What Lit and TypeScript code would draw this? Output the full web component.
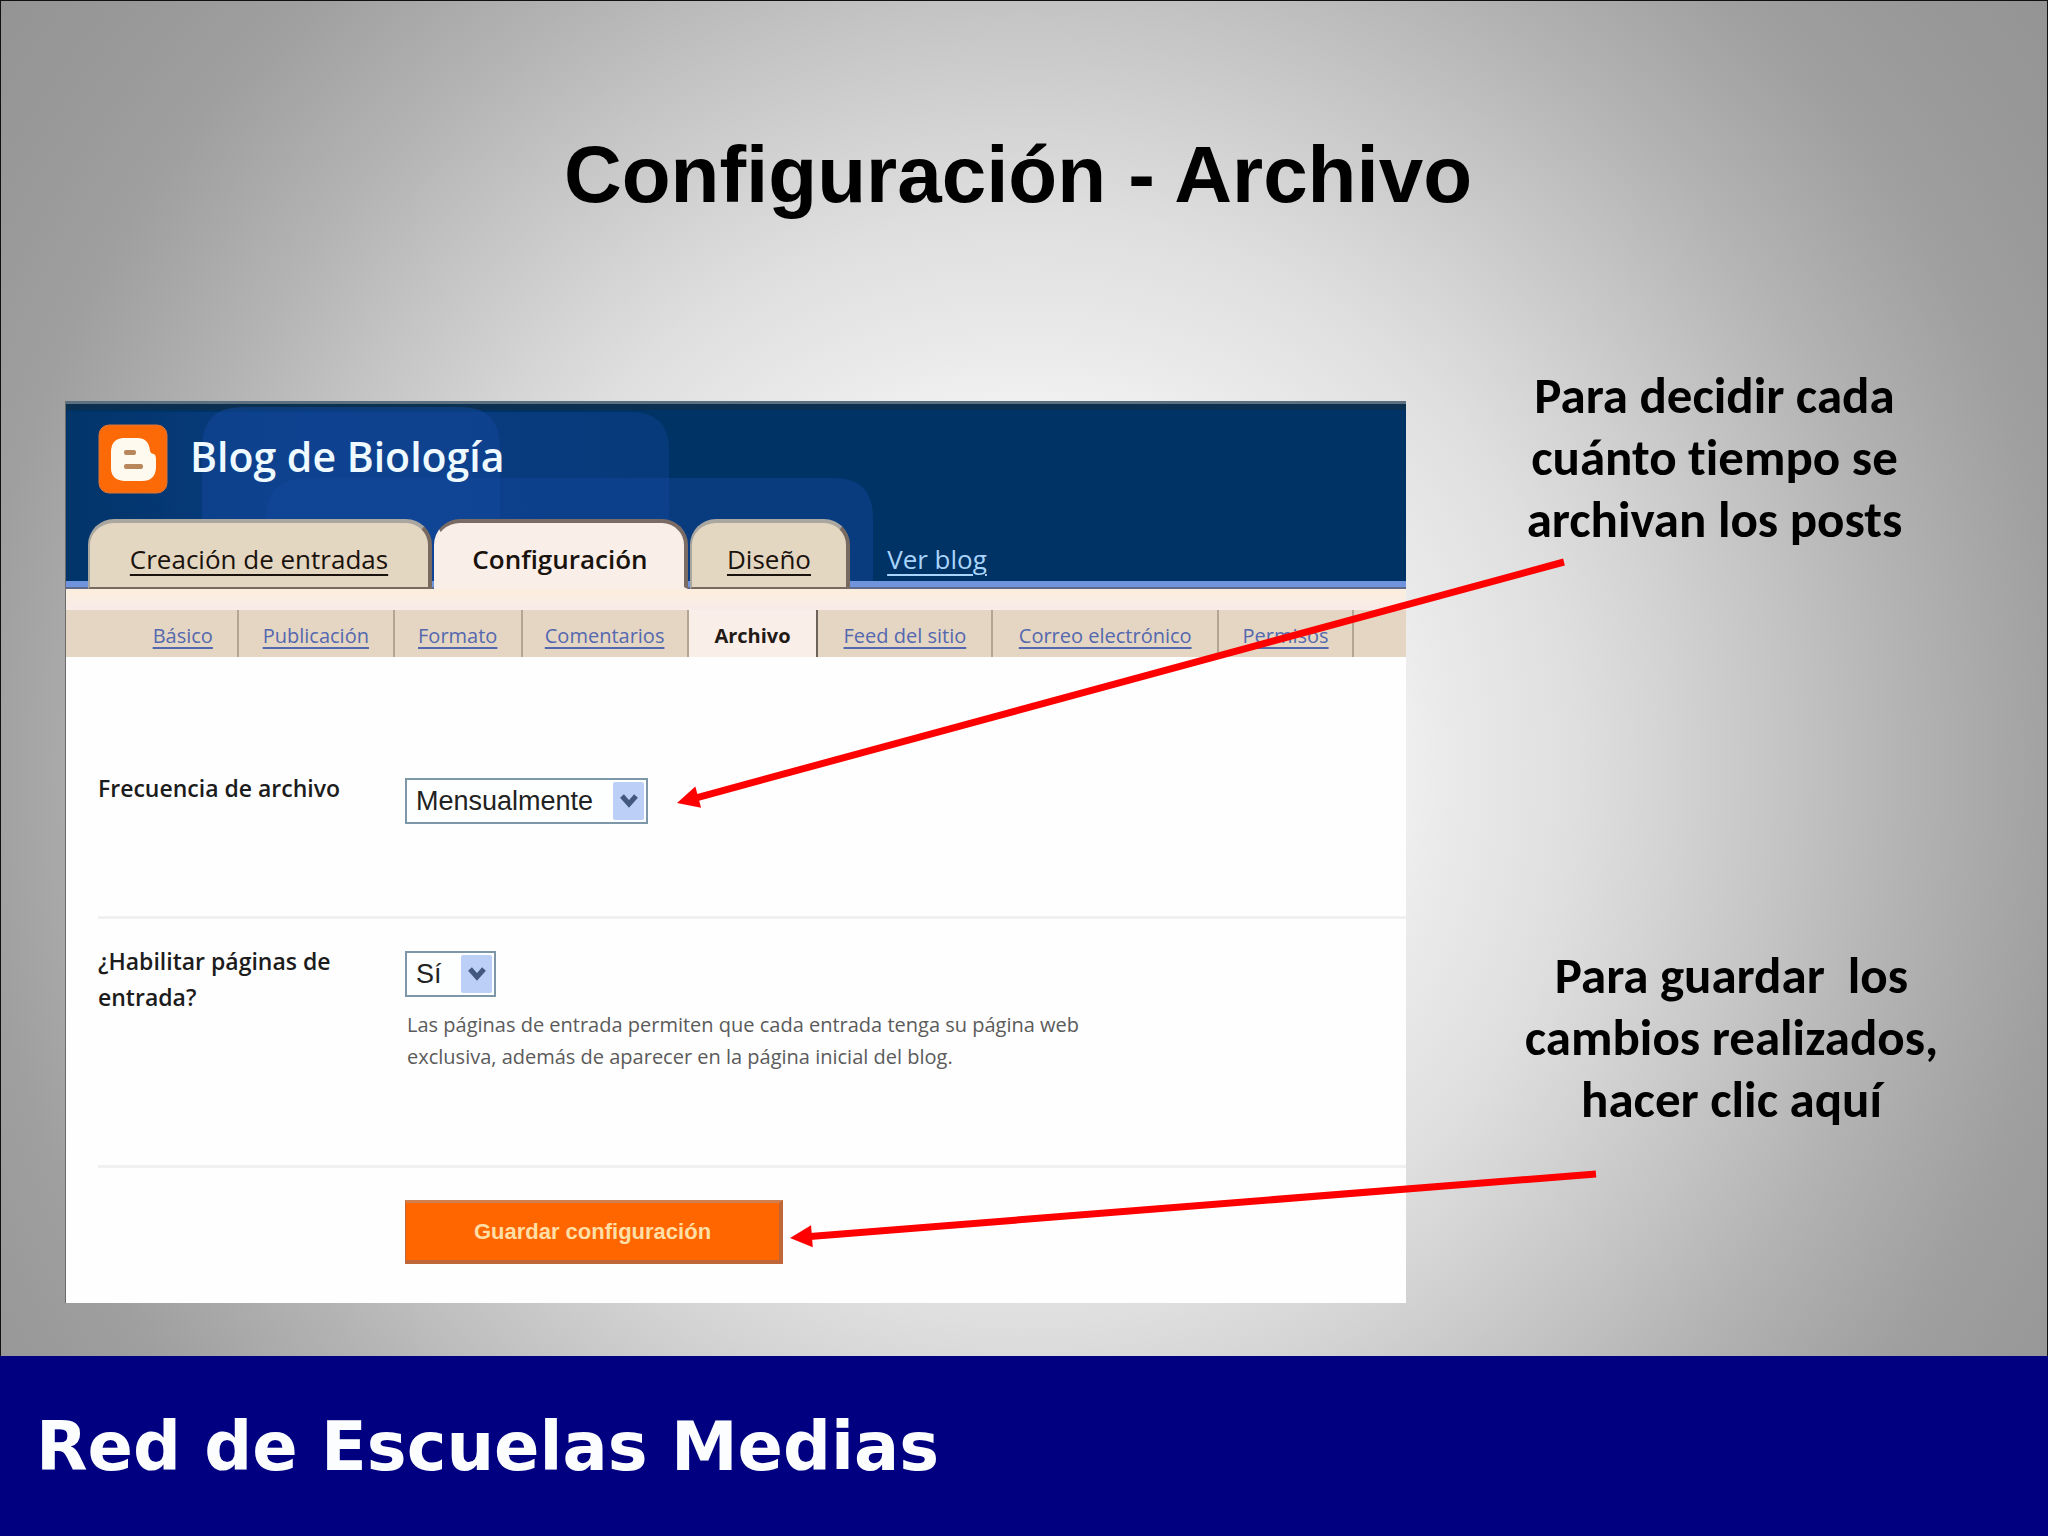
import { LitElement, html, css, svg } from "lit";
import { customElement, property } from "lit/decorators.js";
import { classMap } from "lit/directives/class-map.js";

@customElement("blog-header")
class BlogHeader extends LitElement {
  static styles = css`
    :host {
      display: block;
      font-family: "Open Sans", "Noto Sans", sans-serif;
    }
    .header {
      position: relative;
      display: flex;
      flex-direction: column;
      justify-content: space-between;
      height: 188px;
      background: #003365;
      border-top: 3px solid #5c7080;
      box-sizing: border-box;
    }
    .shapes {
      position: absolute;
      inset: 0;
      width: 100%;
      height: 100%;
    }
    .brand {
      position: relative;
      display: flex;
      align-items: flex-start;
      gap: 22px;
      padding: 20px 0 0 32px;
    }
    .logo {
      width: 70px;
      height: 70px;
    }
    .name {
      margin: 0;
      font-size: 41px;
      line-height: 64px;
      font-weight: 600;
      color: #eefaff;
    }
    .tabs {
      position: relative;
      display: flex;
      align-items: stretch;
      gap: 2px;
      height: 70px;
      padding-left: 22px;
    }
    .tabs::before {
      content: "";
      position: absolute;
      inset: auto 0 0 0;
      height: 6px;
      background: #7093dd;
      border-bottom: 2px solid #5d6a8c;
    }
    .tab {
      position: relative;
      display: flex;
      align-items: center;
      justify-content: center;
      box-sizing: border-box;
      padding-top: 8px;
      border: solid #786a60;
      border-width: 4px 4px 2px 2px;
      border-top-color: #a9a7a0;
      border-left-color: #a9a7a0;
      border-radius: 26px 26px 0 0;
      background: #e4d7c2;
      font-size: 26px;
      line-height: 36px;
      color: #1a120c;
      text-underline-offset: 5px;
      text-decoration-thickness: 2px;
    }
    .entries {
      width: 344px;
    }
    .settings {
      width: 254px;
      background: #f9eee8;
      border-color: #7a6c64;
      border-bottom-color: #f9eee8;
      border-left-color: #f9eee8;
      font-weight: 600;
      text-decoration: none;
    }
    .design {
      width: 160px;
    }
    .view {
      width: 172px;
      border-color: transparent;
      background: none;
      color: #a9d4fb;
    }
  `;

  render() {
    return html`
      <header class="header">
        <svg class="shapes" viewBox="0 0 1341 185" preserveAspectRatio="xMinYMin slice" aria-hidden="true">
          <defs>
            <linearGradient id="fade" x1="0" x2="1">
              <stop offset="0" stop-color="#0f4390" stop-opacity="0.1" />
              <stop offset="0.4" stop-color="#114499" stop-opacity="0.6" />
              <stop offset="1" stop-color="#114499" stop-opacity="0.4" />
            </linearGradient>
          </defs>
          <rect width="1341" height="6" fill="#0b2f50" />
          <path d="M0 8H565Q603 8 603 46V185H0Z" fill="url(#fade)" />
          <path d="M136 185V44Q136 3 176 3H395Q434 3 434 44V185Z" fill="#12479b" opacity="0.55" />
          <path d="M200 185V114Q200 74 240 74H768Q807 74 807 114V185Z" fill="#12459a" opacity="0.5" />
        </svg>
        <div class="brand">
          <svg class="logo" viewBox="0 0 70 70" role="img" aria-label="Blogger">
            <rect x="1" y="1" width="68" height="68" rx="10" fill="#fb6a06" stroke="#d9743c" stroke-width="1" />
            <path
              d="M25 14H39Q51 14 52 27Q53 30 56 30Q58 31 58 36V44Q57 57 44 57H26Q13 56 13 44V28Q13 15 25 14Z"
              fill="#fffaf0"
            />
            <rect x="26" y="26" width="12" height="5" rx="2" fill="#b8875c" />
            <rect x="26" y="40" width="19" height="5" rx="2" fill="#b8875c" />
          </svg>
          <h2 class="name">Blog de Biología</h2>
        </div>
        <nav class="tabs">
          <a class="tab entries" href="#entradas">Creación de entradas</a>
          <a class="tab settings" href="#configuracion" aria-current="page">Configuración</a>
          <a class="tab design" href="#diseno">Diseño</a>
          <a class="tab view" href="#blog">Ver blog</a>
        </nav>
      </header>
    `;
  }
}

@customElement("settings-menu")
class SettingsMenu extends LitElement {
  @property({ type: String }) current = "Archivo";

  static sections = [
    "Básico",
    "Publicación",
    "Formato",
    "Comentarios",
    "Archivo",
    "Feed del sitio",
    "Correo electrónico",
    "Permisos",
  ];

  static styles = css`
    :host {
      display: block;
      padding-top: 21px;
      background: linear-gradient(#fbeedd, #f8ebe8 21px);
      font-family: "Open Sans", "Noto Sans", sans-serif;
    }
    .menu {
      display: grid;
      grid-template-columns: 173fr 156fr 128fr 166fr 130fr 175fr 226fr 135fr 52fr;
      height: 47px;
      margin: 0;
      padding: 0;
      list-style: none;
      background: #e4d6c2;
    }
    .item {
      display: flex;
      align-items: center;
      justify-content: center;
      padding-top: 4px;
      border-right: 2px solid #b3a591;
    }
    .item:first-child {
      justify-content: flex-end;
      padding-right: 24px;
    }
    .item.active {
      background: #f9eee8;
      border-right-color: #6c625a;
    }
    .link {
      font-size: 20px;
      line-height: 28px;
      white-space: nowrap;
      color: #5468b0;
      text-underline-offset: 4px;
      text-decoration-thickness: 2px;
    }
    .active .link {
      color: #231a16;
      font-weight: 700;
      text-decoration: none;
    }
  `;

  render() {
    return html`
      <ul class="menu">
        ${SettingsMenu.sections.map(
          (name) => html`
            <li class=${classMap({ item: true, active: name === this.current })}>
              <a class="link" href="#">${name}</a>
            </li>
          `,
        )}
      </ul>
    `;
  }
}

@customElement("archive-form")
class ArchiveForm extends LitElement {
  static styles = css`
    :host {
      display: block;
      padding-left: 32px;
      background: #fefefe;
      font-family: "Open Sans", "Noto Sans", sans-serif;
    }
    .row {
      display: grid;
      grid-template-columns: 307px 1fr;
      align-items: start;
      box-sizing: border-box;
      border-bottom: 3px solid #f1eff0;
    }
    .frequency {
      padding: 121px 0 92px;
    }
    .pages {
      padding: 32px 0 92px;
    }
    .actions {
      padding: 32px 0 39px;
      border: 0;
    }
    .label {
      max-width: 280px;
      margin-top: -8px;
      font-size: 23px;
      line-height: 36px;
      font-weight: 600;
      color: #1c1c1c;
    }
    .picker {
      position: relative;
      display: inline-block;
      vertical-align: top;
    }
    .select {
      display: block;
      appearance: none;
      height: 46px;
      margin: 0;
      padding: 0 52px 0 9px;
      border: 2px solid #7e97a8;
      border-radius: 0;
      background: #fdfffe;
      font-family: "Liberation Sans", Arial, sans-serif;
      font-size: 27px;
      color: #222;
    }
    .chevron {
      position: absolute;
      top: 4px;
      right: 4px;
      width: 31px;
      height: 38px;
      pointer-events: none;
    }
    .help {
      margin: 12px 0 0 2px;
      max-width: 720px;
      font-size: 20px;
      line-height: 32px;
      color: #5b5b5b;
    }
    .save {
      grid-column: 2;
      justify-self: start;
      width: 378px;
      height: 64px;
      padding: 0;
      border: solid #c0673a;
      border-width: 3px 4px 4px 1px;
      border-top-color: #d08050;
      background: #ff6600;
      font-family: "Liberation Sans", Arial, sans-serif;
      font-size: 22px;
      font-weight: 700;
      color: #ffdfa6;
    }
  `;

  private chevron() {
    return html`
      <svg class="chevron" viewBox="0 0 31 38" aria-hidden="true">
        <rect width="31" height="38" rx="2" fill="#bccff6" />
        <path d="M9 14L16 22L23 14" fill="none" stroke="#42587f" stroke-width="5" />
      </svg>
    `;
  }

  render() {
    return html`
      <form @submit=${(event: Event) => event.preventDefault()}>
        <div class="row frequency">
          <label class="label" for="frequency">Frecuencia de archivo</label>
          <div>
            <span class="picker">
              <select class="select" id="frequency">
                <option>Mensualmente</option>
              </select>
              ${this.chevron()}
            </span>
          </div>
        </div>
        <div class="row pages">
          <label class="label" for="pages">¿Habilitar páginas de entrada?</label>
          <div>
            <span class="picker">
              <select class="select" id="pages" aria-describedby="pages-help">
                <option>Sí</option>
              </select>
              ${this.chevron()}
            </span>
            <p class="help" id="pages-help">
              Las páginas de entrada permiten que cada entrada tenga su página web<br />
              exclusiva, además de aparecer en la página inicial del blog.
            </p>
          </div>
        </div>
        <div class="row actions">
          <button class="save" type="submit">Guardar configuración</button>
        </div>
      </form>
    `;
  }
}

@customElement("app-root")
class AppRoot extends LitElement {
  static styles = css`
    :host {
      display: block;
    }
    .slide {
      position: relative;
      display: flex;
      flex-direction: column;
      min-height: 100vh;
      background: radial-gradient(
        circle farthest-corner at 50% 50%,
        #ffffff 0%,
        #f1f1f1 28%,
        #ebeaeb 33%,
        #dfdfdf 43%,
        #d4d4d4 50%,
        #c4c3c4 60%,
        #b4b3b4 69%,
        #a9a8a9 76%,
        #a09fa0 82%,
        #999999 90%,
        #949494 100%
      );
    }
    .stage {
      flex: 1;
      display: flex;
      flex-direction: column;
      box-sizing: border-box;
      border: solid #111;
      border-width: 1px 1px 0 1px;
    }
    .title {
      margin: 0;
      padding: 128px 12px 0 0;
      text-align: center;
      font-family: "Liberation Sans", Arial, sans-serif;
      font-size: 80px;
      line-height: 92px;
      font-weight: 700;
      color: #000;
    }
    .content {
      display: grid;
      grid-template-columns: 1341fr 577fr;
      padding: 180px 64px 52px;
    }
    .panel {
      box-sizing: border-box;
      border-left: 1px solid #6a6a6a;
    }
    .captions {
      display: flex;
      flex-direction: column;
      gap: 394px;
      margin-top: -36px;
    }
    .caption {
      margin: 0;
      text-align: center;
      white-space: pre;
      font-family: "Carlito", "Lato", sans-serif;
      font-size: 51px;
      line-height: 62px;
      font-weight: 700;
      font-variant-ligatures: none;
      color: #000;
    }
    .frequency-note {
      padding-left: 40px;
    }
    .save-note {
      padding-left: 74px;
    }
    .arrows {
      position: absolute;
      inset: 0;
      width: 100%;
      height: 100%;
      pointer-events: none;
    }
    .footer {
      display: flex;
      align-items: center;
      box-sizing: border-box;
      height: 180px;
      padding: 2px 36px 0;
      background: #000080;
      font-family: "DejaVu Sans", Verdana, sans-serif;
      font-size: 67px;
      line-height: 80px;
      font-weight: 700;
      color: #fbfdff;
    }
  `;

  private arrow(x1: number, y1: number, x2: number, y2: number) {
    const length = Math.hypot(x2 - x1, y2 - y1);
    const angle = (Math.atan2(y2 - y1, x2 - x1) * 180) / Math.PI;
    return svg`
      <g transform="translate(${x1} ${y1}) rotate(${angle})" fill="#ff0000">
        <path d="M0 0H${length - 20}" stroke="#ff0000" stroke-width="7" />
        <path d="M${length} 0L${length - 22} -11V11Z" />
      </g>
    `;
  }

  render() {
    return html`
      <main class="slide">
        <div class="stage">
          <h1 class="title">Configuración - Archivo</h1>
          <div class="content">
            <section class="panel">
              <blog-header></blog-header>
              <settings-menu></settings-menu>
              <archive-form></archive-form>
            </section>
            <div class="captions">
              <p class="caption frequency-note">${"Para decidir cada\ncuánto tiempo se\narchivan los posts"}</p>
              <p class="caption save-note">${"Para guardar  los\ncambios realizados,\nhacer clic aquí"}</p>
            </div>
          </div>
        </div>
        <footer class="footer">Red de Escuelas Medias</footer>
        <svg class="arrows" viewBox="0 0 2048 1536" aria-hidden="true">
          ${this.arrow(1564, 562, 677, 803)} ${this.arrow(1596, 1174, 790, 1238)}
        </svg>
      </main>
    `;
  }
}
